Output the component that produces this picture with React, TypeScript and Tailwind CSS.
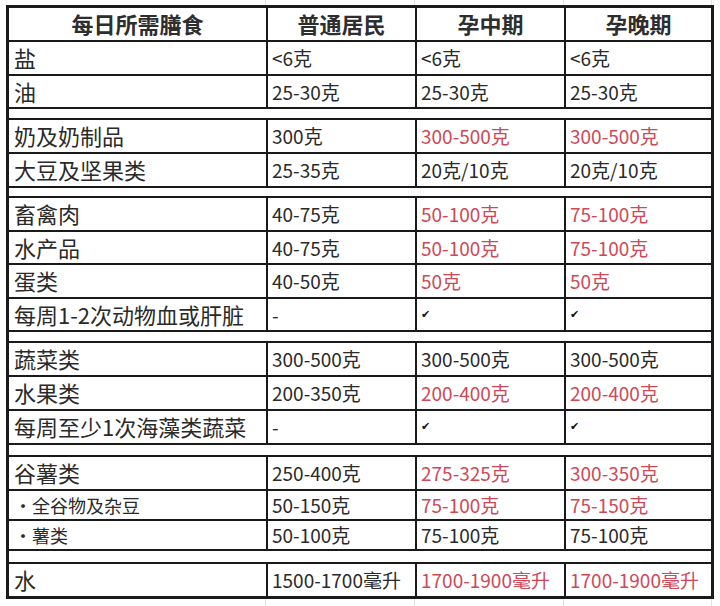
type Row =
  | { gap: true; h: string }
  | {
      gap?: false
      h: string
      label: string
      sub?: boolean
      vals: [string, string, string]
      red?: [boolean, boolean, boolean]
      last?: boolean
    }

const rows: Row[] = [
  { h: "h-[34px]", label: "盐", vals: ["<6克", "<6克", "<6克"] },
  { h: "h-[33px]", label: "油", vals: ["25-30克", "25-30克", "25-30克"] },
  { gap: true, h: "h-[11px]" },
  { h: "h-[34px]", label: "奶及奶制品", vals: ["300克", "300-500克", "300-500克"], red: [false, true, true] },
  { h: "h-[34px]", label: "大豆及坚果类", vals: ["25-35克", "20克/10克", "20克/10克"] },
  { gap: true, h: "h-[10px]" },
  { h: "h-[34px]", label: "畜禽肉", vals: ["40-75克", "50-100克", "75-100克"], red: [false, true, true] },
  { h: "h-[33px]", label: "水产品", vals: ["40-75克", "50-100克", "75-100克"], red: [false, true, true] },
  { h: "h-[34px]", label: "蛋类", vals: ["40-50克", "50克", "50克"], red: [false, true, true] },
  { h: "h-[33px]", label: "每周1-2次动物血或肝脏", vals: ["-", "✔", "✔"] },
  { gap: true, h: "h-[11px]" },
  { h: "h-[34px]", label: "蔬菜类", vals: ["300-500克", "300-500克", "300-500克"] },
  { h: "h-[34px]", label: "水果类", vals: ["200-350克", "200-400克", "200-400克"], red: [false, true, true] },
  { h: "h-[34px]", label: "每周至少1次海藻类蔬菜", vals: ["-", "✔", "✔"] },
  { gap: true, h: "h-[12px]" },
  { h: "h-[34px]", label: "谷薯类", vals: ["250-400克", "275-325克", "300-350克"], red: [false, true, true] },
  { h: "h-[30px]", label: "・全谷物及杂豆", sub: true, vals: ["50-150克", "75-100克", "75-150克"], red: [false, true, true] },
  { h: "h-[30px]", label: "・薯类", sub: true, vals: ["50-100克", "75-100克", "75-100克"] },
  { gap: true, h: "h-[13px]" },
  { h: "h-[32px]", label: "水", vals: ["1500-1700毫升", "1700-1900毫升", "1700-1900毫升"], red: [false, true, true], last: true },
]

const widths = ["w-[149px]", "w-[149px]", "w-[147px]"]

function GridStrip({ h }: { h: string }) {
  return (
    <div className={`flex ${h}`}>
      <div className="w-[266px] border-r border-[#e2e2e2]" />
      <div className="w-[149px] border-r border-[#e2e2e2]" />
      <div className="w-[149px] border-r border-[#e2e2e2]" />
      <div className="w-[148px] border-r border-[#e2e2e2]" />
    </div>
  )
}

function Value({ text, red }: { text: string; red?: boolean }) {
  if (text === "✔") {
    return <span className="font-['DejaVu_Sans',sans-serif] text-[11px] text-[#111]">✔</span>
  }
  return <span className={red ? "text-[#cf4857]" : "text-[#2a2a2a]"}>{text}</span>
}

export default function App() {
  return (
    <div className="w-[720px] h-[606px] overflow-hidden bg-white font-['Noto_Sans_CJK_SC','Noto_Sans',sans-serif]">
      <GridStrip h="h-[5px]" />
      <div className="ml-[6px] w-[708px] border-[3px] border-[#1a1a1a]">
        {/* header */}
        <div className="flex h-[34px] border-b-2 border-[#1a1a1a] text-[22px] font-bold leading-tight text-[#2e2e2e]">
          <div className="flex w-[257px] items-center justify-center">每日所需膳食</div>
          <div className="flex w-[149px] items-center justify-center border-l-2 border-[#1a1a1a]">普通居民</div>
          <div className="flex w-[149px] items-center justify-center border-l-2 border-[#1a1a1a]">孕中期</div>
          <div className="flex w-[147px] items-center justify-center border-l-2 border-[#1a1a1a]">孕晚期</div>
        </div>

        {rows.map((r, i) =>
          r.gap ? (
            <div key={i} className={`${r.h} border-b-2 border-[#1a1a1a]`} />
          ) : (
            <div
              key={i}
              className={`flex ${r.h} ${r.last ? "" : "border-b-2 border-[#1a1a1a]"}`}
            >
              <div
                className={`flex w-[257px] items-center pl-[5px] leading-tight text-[#2a2a2a] ${
                  r.sub ? "text-[18px]" : "text-[22px]"
                }`}
              >
                {r.label}
              </div>
              {r.vals.map((v, j) => (
                <div
                  key={j}
                  className={`flex ${widths[j]} items-center border-l-2 border-[#1a1a1a] pl-1 text-[19px] leading-tight`}
                >
                  <Value text={v} red={r.red?.[j]} />
                </div>
              ))}
            </div>
          )
        )}
      </div>
      <GridStrip h="h-[7px]" />
    </div>
  )
}
